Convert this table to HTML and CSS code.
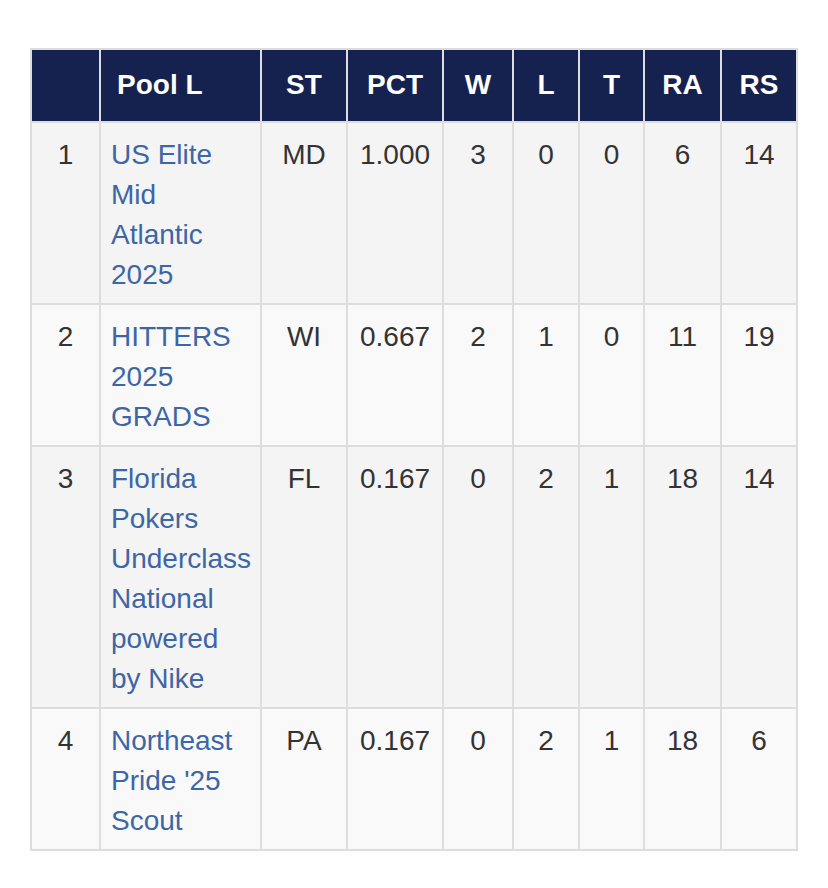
FILE: index.html
```html
<!DOCTYPE html>
<html>
<head>
<meta charset="utf-8">
<link rel="stylesheet" href="styles.css">
</head>
<body>
<table class="standings">
  <colgroup>
    <col class="c-rank"><col class="c-team"><col class="c-st"><col class="c-pct"><col class="c-w"><col class="c-l"><col class="c-t"><col class="c-ra"><col class="c-rs">
  </colgroup>
  <thead>
    <tr>
      <th></th>
      <th class="left">Pool L</th>
      <th>ST</th>
      <th>PCT</th>
      <th>W</th>
      <th>L</th>
      <th>T</th>
      <th>RA</th>
      <th>RS</th>
    </tr>
  </thead>
  <tbody>
    <tr>
      <td>1</td>
      <td class="team"><a href="#">US Elite Mid Atlantic 2025</a></td>
      <td>MD</td><td>1.000</td><td>3</td><td>0</td><td>0</td><td>6</td><td>14</td>
    </tr>
    <tr>
      <td>2</td>
      <td class="team"><a href="#">HITTERS 2025 GRADS</a></td>
      <td>WI</td><td>0.667</td><td>2</td><td>1</td><td>0</td><td>11</td><td>19</td>
    </tr>
    <tr>
      <td>3</td>
      <td class="team"><a href="#">Florida Pokers Underclass National powered by Nike</a></td>
      <td>FL</td><td>0.167</td><td>0</td><td>2</td><td>1</td><td>18</td><td>14</td>
    </tr>
    <tr>
      <td>4</td>
      <td class="team"><a href="#">Northeast Pride '25 Scout</a></td>
      <td>PA</td><td>0.167</td><td>0</td><td>2</td><td>1</td><td>18</td><td>6</td>
    </tr>
  </tbody>
</table>
</body>
</html>
```
FILE: styles.css
```css
html, body {
  margin: 0;
  padding: 0;
  background: #ffffff;
}
body {
  font-family: "Liberation Sans", Arial, Helvetica, sans-serif;
  color: #333333;
}
.standings {
  margin: 48px 0 0 30px;
  border-collapse: collapse;
  table-layout: fixed;
  width: 768px;
  border: 2px solid #dddddd;
  font-size: 28px;
  line-height: 40px;
}
.c-rank { width: 69px; }
.c-team { width: 161px; }
.c-st { width: 86px; }
.c-pct { width: 96px; }
.c-w { width: 70px; }
.c-l { width: 66px; }
.c-t { width: 65px; }
.c-ra { width: 77px; }
.c-rs { width: 76px; }

.standings th {
  background: #15224f;
  color: #ffffff;
  font-weight: bold;
  text-align: center;
  padding: 15px 4px 16px;
  border: 2px solid #dddddd;
}
.standings th.left {
  text-align: left;
  padding-left: 16px;
}
.standings td {
  border: 2px solid #dddddd;
  padding: 12px 4px 8px;
  text-align: center;
  vertical-align: top;
}
.standings td.team {
  text-align: left;
  padding-left: 10px;
  padding-right: 6px;
}
.standings tbody tr:nth-child(odd) td { background: #f4f4f4; }
.standings tbody tr:nth-child(even) td { background: #f9f9f9; }
.standings a {
  color: #3d66a6;
  text-decoration: none;
}
```
